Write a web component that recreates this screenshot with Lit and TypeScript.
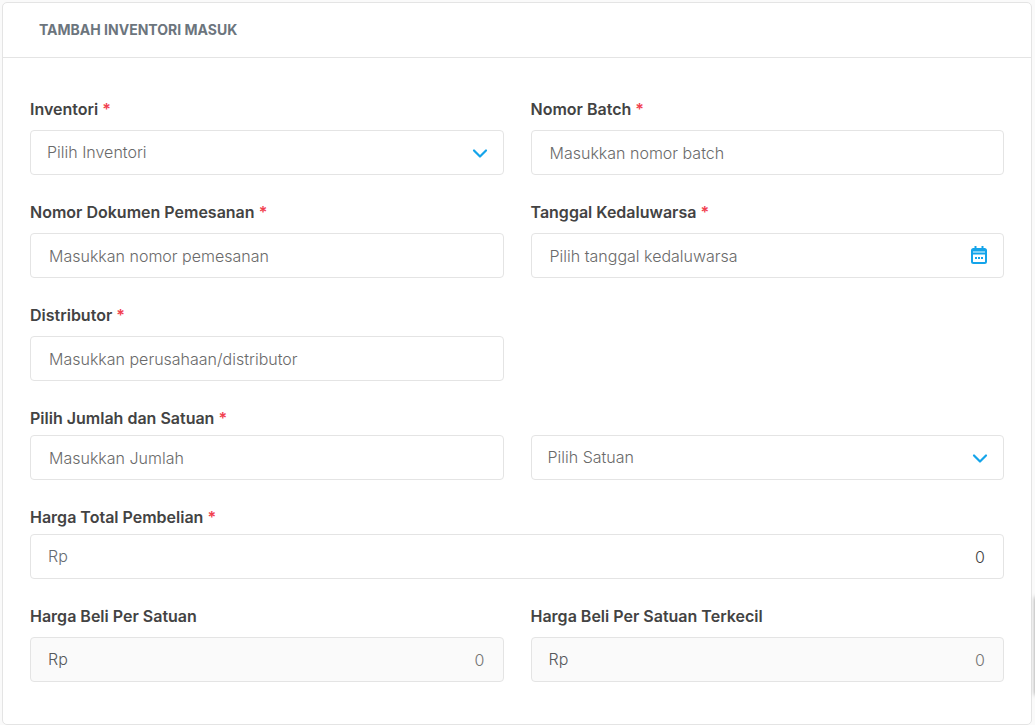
import { LitElement, html, css, svg, nothing } from "lit";
import { customElement, property } from "lit/decorators.js";

const chevron = svg`<path d="M2 2.5 8 8.5 14 2.5" fill="none" stroke="#14a4ea" stroke-width="2.2" stroke-linecap="round" stroke-linejoin="round"/>`;

const fieldStyles = css`
  * {
    box-sizing: border-box;
  }
  :host {
    display: block;
    min-width: 0;
  }
  .label {
    display: block;
    height: 24px;
    line-height: 24px;
    margin-bottom: 9px;
    font-size: 16px;
    font-weight: 600;
    color: #434343;
    white-space: nowrap;
  }
  :host([compact]) .label {
    margin-bottom: 5px;
  }
  .required {
    color: #f1414f;
  }
  .box {
    position: relative;
    display: flex;
    align-items: center;
    height: 45px;
    border: 1px solid #e4e4e4;
    border-radius: 4px;
    background: #fff;
    overflow: hidden;
  }
  .box.disabled {
    background: #fafafa;
  }
  .box:focus-within {
    border-color: #14a4ea;
  }
  .control {
    flex: 1;
    min-width: 0;
    width: 100%;
    height: 43px;
    margin: 0;
    border: 0;
    outline: 0;
    padding: 0 18px;
    background: transparent;
    font: 300 16px/24px Inter, "Open Sans", sans-serif;
    color: #434343;
  }
  .control::placeholder {
    color: #6a6a6a;
    opacity: 1;
  }
  select.control {
    appearance: none;
    padding: 0 40px 2px 16px;
    color: #6a6a6a;
  }
  .money .control {
    text-align: right;
  }
  .disabled .control {
    color: #757575;
  }
  .prefix {
    padding: 0 0 2px 17px;
    font-weight: 300;
    line-height: 24px;
    color: #666c72;
  }
  .disabled .prefix {
    color: #55585b;
  }
  .chevron {
    position: absolute;
    right: 15px;
    top: 17px;
    width: 16px;
    height: 11px;
    pointer-events: none;
  }
  .picker {
    display: flex;
    margin: 0 14px 0 0;
    padding: 0 0 2px;
    border: 0;
    background: none;
    cursor: pointer;
  }
`;

@customElement("form-field")
class FormField extends LitElement {
  @property() label = "";
  @property() kind: "text" | "select" | "date" | "money" = "text";
  @property() placeholder = "";
  @property({ type: Boolean }) required = false;
  @property({ type: Boolean }) disabled = false;
  @property({ type: Boolean, reflect: true }) compact = false;

  static styles = fieldStyles;

  private renderControl() {
    if (this.kind === "select") {
      return html`
        <select id="control" class="control" aria-label=${this.label || this.placeholder}>
          <option>${this.placeholder}</option>
        </select>
        <svg class="chevron" viewBox="0 0 16 11" aria-hidden="true">${chevron}</svg>
      `;
    }
    if (this.kind === "money") {
      return html`
        <span class="prefix">Rp</span>
        <input id="control" class="control" type="text" inputmode="numeric" .value=${"0"} ?disabled=${this.disabled} />
      `;
    }
    return html`
      <input id="control" class="control" type="text" aria-label=${this.label || this.placeholder} placeholder=${this.placeholder} />
      ${this.kind === "date"
        ? html`<button class="picker" type="button" aria-label="Pilih tanggal">
            <svg width="20" height="20" viewBox="0 0 20 20" aria-hidden="true">
              <rect x="3" y="4" width="14" height="14" rx="1.5" fill="none" stroke="#14a4ea" stroke-width="2" />
              <rect x="3" y="4" width="14" height="2.5" fill="#14a4ea" />
              <rect x="4" y="6" width="12" height="2" fill="#7fd0f5" />
              <path d="M3 8.7H17" stroke="#14a4ea" stroke-width="1.4" />
              <path d="M6.5 1V4M13.5 1V4" stroke="#14a4ea" stroke-width="2" />
              <path d="M6 13h2M9 13h2M12 13h2" stroke="#14a4ea" stroke-width="2" />
            </svg>
          </button>`
        : nothing}
    `;
  }

  render() {
    return html`
      ${this.label
        ? html`<label class="label" for="control"
            >${this.label}${this.required ? html` <span class="required">*</span>` : nothing}</label
          >`
        : nothing}
      <div class="box ${this.kind} ${this.disabled ? "disabled" : ""}">${this.renderControl()}</div>
    `;
  }
}

@customElement("app-root")
class AppRoot extends LitElement {
  static styles = css`
    * {
      box-sizing: border-box;
    }
    :host {
      display: block;
      padding: 2px 3px 0 2px;
      background: #fafafa;
      font-family: Inter, "Open Sans", sans-serif;
      font-size: 16px;
    }
    .card {
      border: 1px solid #e4e4e4;
      border-radius: 5px;
      background: #fff;
    }
    .header {
      padding: 15px 36px;
      border-bottom: 1px solid #e4e4e4;
    }
    .title {
      margin: 0;
      font-size: 14px;
      line-height: 24px;
      font-weight: 700;
      color: #6c757d;
      text-transform: uppercase;
    }
    .form {
      display: grid;
      grid-template-columns: 1fr 1fr;
      gap: 25px 27px;
      align-items: end;
      padding: 39px 27px 42px;
    }
    .full {
      grid-column: 1 / -1;
    }
    .first {
      grid-column: 1;
    }
    .drawer {
      position: fixed;
      right: -5px;
      bottom: 30px;
      width: 5px;
      height: 98px;
      box-shadow: 0 0 4px rgba(0, 0, 0, 0.4);
    }
  `;

  render() {
    return html`
      <section class="card">
        <header class="header"><h1 class="title">Tambah Inventori Masuk</h1></header>
        <form class="form">
          <form-field label="Inventori" required kind="select" placeholder="Pilih Inventori"></form-field>
          <form-field label="Nomor Batch" required placeholder="Masukkan nomor batch"></form-field>
          <form-field label="Nomor Dokumen Pemesanan" required placeholder="Masukkan nomor pemesanan"></form-field>
          <form-field label="Tanggal Kedaluwarsa" required kind="date" placeholder="Pilih tanggal kedaluwarsa"></form-field>
          <form-field class="first" label="Distributor" required placeholder="Masukkan perusahaan/distributor"></form-field>
          <form-field class="first" compact label="Pilih Jumlah dan Satuan" required placeholder="Masukkan Jumlah"></form-field>
          <form-field kind="select" placeholder="Pilih Satuan"></form-field>
          <form-field class="full" compact label="Harga Total Pembelian" required kind="money"></form-field>
          <form-field label="Harga Beli Per Satuan" kind="money" disabled></form-field>
          <form-field label="Harga Beli Per Satuan Terkecil" kind="money" disabled></form-field>
        </form>
      </section>
      <div class="drawer"></div>
    `;
  }
}
